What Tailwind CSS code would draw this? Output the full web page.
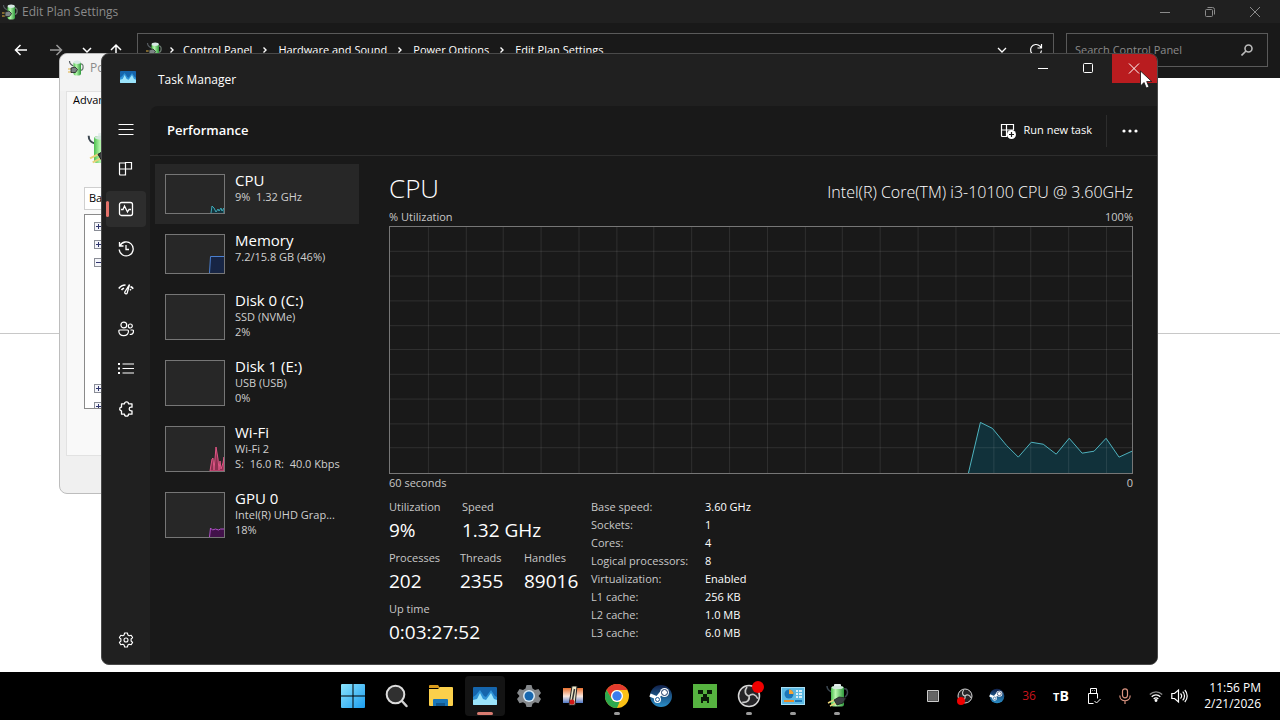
<!DOCTYPE html>
<html lang="en">
<head>
    <meta charset="UTF-8">
    <meta name="viewport" content="width=device-width, initial-scale=1.0">
    <title>Task Manager</title>
    <script src="https://cdn.jsdelivr.net/npm/@tailwindcss/browser@4"></script>
</head>
<body class="h-screen flex flex-col overflow-hidden bg-white font-['Open_Sans','Noto_Sans',sans-serif] text-[11px] text-white">

    <!-- Shared icons -->
    <svg class="absolute size-0">
        <linearGradient id="steamBg" x1="0" y1="0" x2="0" y2="1"><stop stop-color="#11204a"/><stop offset="1" stop-color="#2a8fc9"/></linearGradient>
        <linearGradient id="cell" x1="0" y1="0" x2="1" y2="0"><stop stop-color="#4cc04f"/><stop offset=".35" stop-color="#b8f7ae"/><stop offset="1" stop-color="#2f9a3c"/></linearGradient>
        <symbol id="power" viewBox="0 0 16 16">
            <path d="M1.500 1c0 3 1.500 4 4 5" fill="none" stroke="#555b60" stroke-width="1.200"/>
            <path d="M12.500 4c3.500-.5 3.500 6 0 6.500" fill="none" stroke="#6b7a70" stroke-width="1.200"/>
            <rect x="5.500" y="1.500" width="7.500" height="14" rx="2" fill="url(#cell)"/>
            <ellipse cx="9.200" cy="2.200" rx="3.600" ry="1.700" fill="#d7e8e4"/>
            <path d="M0 9h4M0 12h4" stroke="#e0b040" stroke-width="1.200"/>
            <path d="M3 8l4-1 2.500 2.500-2 3H3z" fill="#7c8284" stroke="#1d2122" stroke-width=".8"/>
        </symbol>
        <symbol id="battery" viewBox="0 0 24 24">
            <path d="M2 2c0 4 2 5 5 6" fill="none" stroke="#3c4750" stroke-width="1.500"/>
            <path d="M18 5c5-2 6 5 2 8" fill="none" stroke="#3c4750" stroke-width="1.500"/>
            <rect x="9" y="0" width="7" height="4" rx="1" fill="#e4eeec"/>
            <rect x="6" y="2.500" width="13" height="20" rx="2" fill="url(#cell)"/>
            <ellipse cx="12.500" cy="3.500" rx="6" ry="1.600" fill="#d3e8dd"/>
            <path d="M3 19l6-3M5 22l6-3" stroke="#e8d27a" stroke-width="1.500"/>
            <path d="M9 16l5-3 7 1-3 5-6 2z" fill="#3a3f42" stroke="#15181a" stroke-width=".7"/>
        </symbol>
        <symbol id="steam" viewBox="0 0 24 24">
            <circle cx="12" cy="12" r="11" fill="url(#steamBg)"/>
            <path d="M1 11l7 3 5-6" fill="none" stroke="#fff" stroke-width="3.500"/>
            <circle cx="15.500" cy="8.500" r="4.500" fill="#fff"/>
            <circle cx="15.500" cy="8.500" r="3" fill="#fff" stroke="#173463" stroke-width="1"/>
            <circle cx="8.500" cy="15.500" r="3.500" fill="#fff"/>
            <circle cx="8.500" cy="15.500" r="2" fill="#fff" stroke="#1c5a94" stroke-width="1"/>
        </symbol>
        <symbol id="obs" viewBox="0 0 24 24">
            <circle cx="12" cy="12" r="10.500" fill="#252427" stroke="#d8d8d8" stroke-width="1.500"/>
            <g fill="none" stroke="#c9c9c9" stroke-width="1.700">
                <path d="M12 12c-4-1-5-5-2-9"/>
                <path d="M12 12c-4-1-5-5-2-9" transform="rotate(120 12 12)"/>
                <path d="M12 12c-4-1-5-5-2-9" transform="rotate(240 12 12)"/>
            </g>
        </symbol>
        <symbol id="wave" viewBox="0 0 24 18">
            <rect width="24" height="18" rx="1" fill="#1565ac"/>
            <path d="M0 10l3-2 4-5 4 6 2 1 5-7 4 6 2 1v8H0z" fill="#2f93d6"/>
            <path d="M0 13l4-1 3-6 3 6 3 1 5-7 3 6 3 1v4a1 1 0 0 1-1 1H1a1 1 0 0 1-1-1z" fill="#9be4fb"/>
        </symbol>
        <symbol id="plus" viewBox="0 0 9 9">
            <rect x=".5" y=".5" width="8" height="8" fill="#f4f5fa" stroke="#8a8d96"/>
            <path d="M2 4.500h5M4.500 2v5" stroke="#30366e"/>
        </symbol>
        <symbol id="minus" viewBox="0 0 9 9">
            <rect x=".5" y=".5" width="8" height="8" fill="#f4f5fa" stroke="#8a8d96"/>
            <path d="M2 4.500h5" stroke="#30366e"/>
        </symbol>
        <symbol id="chevron" viewBox="0 0 6 8"><path d="M1.500 1.500l2.500 2.500-2.500 2.500" fill="none" stroke="#fff" stroke-width="1.400"/></symbol>
    </svg>

    <main class="relative flex-1 min-h-0">

        <!-- Control Panel window -->
        <section class="absolute inset-0 flex flex-col">
            <header class="h-[23px] shrink-0 bg-[#202020] flex items-center pl-0.5 pr-[3px] text-[#8b8b8b]">
                <svg class="size-4"><use href="#power"/></svg>
                <h1 class="ml-1 text-[12px]">Edit Plan Settings</h1>
                <div class="ml-auto flex h-5">
                    <button aria-label="Minimize" class="w-[45px] grid place-items-center"><svg class="size-3" viewBox="0 0 12 12" fill="none" stroke="currentColor"><path d="M1 6.500h10"/></svg></button>
                    <button aria-label="Restore" class="w-[45px] grid place-items-center"><svg class="size-3" viewBox="0 0 12 12" fill="none" stroke="currentColor"><rect x="1.500" y="3.500" width="7" height="7" rx="1"/><path d="M3.500 1.500h5a2 2 0 0 1 2 2v5"/></svg></button>
                    <button aria-label="Close" class="w-[45px] grid place-items-center"><svg class="size-3" viewBox="0 0 12 12" fill="none" stroke="currentColor"><path d="M1 1l10 10M11 1L1 11"/></svg></button>
                </div>
            </header>
            <div class="h-[55px] bg-[#191919] flex items-start pt-[10px] pl-[14px] pr-3 shrink-0">
                <nav class="flex items-center h-[34px] w-[123px]">
                    <button aria-label="Back"><svg class="w-[14px] h-3" viewBox="0 0 14 12" fill="none" stroke="#fff" stroke-width="1.500"><path d="M13 6H1.500M6.500 1l-5 5 5 5"/></svg></button>
                    <button aria-label="Forward" class="ml-[21px]"><svg class="w-[14px] h-3" viewBox="0 0 14 12" fill="none" stroke="#999" stroke-width="1.500"><path d="M1 6h11.500M7.500 1l5 5-5 5"/></svg></button>
                    <button aria-label="Recent" class="ml-[19px]"><svg class="w-[10px] h-3" viewBox="0 0 10 12" fill="none" stroke="#fff" stroke-width="1.500"><path d="M1 4l4 4 4-4"/></svg></button>
                    <button aria-label="Up" class="ml-[18px]"><svg class="w-3 h-[14px]" viewBox="0 0 12 14" fill="none" stroke="#fff" stroke-width="1.500"><path d="M6 14V2M1 7l5-5 5 5"/></svg></button>
                </nav>
                <div class="flex-1 h-[34px] border border-[#5a5a5a] flex items-center pl-2">
                    <svg class="size-4"><use href="#power"/></svg>
                    <svg class="w-1.5 h-2 ml-[7px]"><use href="#chevron"/></svg>
                    <a href="#" class="ml-2">Control Panel</a>
                    <svg class="w-1.5 h-2 mx-2.5"><use href="#chevron"/></svg>
                    <a href="#">Hardware and Sound</a>
                    <svg class="w-1.5 h-2 mx-2.5"><use href="#chevron"/></svg>
                    <a href="#">Power Options</a>
                    <svg class="w-1.5 h-2 mx-2.5"><use href="#chevron"/></svg>
                    <a href="#">Edit Plan Settings</a>
                    <button aria-label="Previous locations" class="ml-auto"><svg class="w-[10px] h-3" viewBox="0 0 10 12" fill="none" stroke="#fff" stroke-width="1.300"><path d="M1 4l4 4 4-4"/></svg></button>
                    <button aria-label="Refresh" class="ml-[22px] mr-[10px]"><svg class="size-[14px]" viewBox="0 0 14 14" fill="none" stroke="#fff" stroke-width="1.200"><path d="M12.500 7.500a5.500 5.500 0 1 1-1.500-4.300L12.500 5M12.500 1v4h-4"/></svg></button>
                </div>
                <label class="ml-3 w-[202px] h-[34px] border border-[#5a5a5a] flex items-center pl-2 pr-3.5">
                    <input type="text" aria-label="Search Control Panel" placeholder="Search Control Panel" class="flex-1 min-w-0 bg-transparent outline-none placeholder:text-[#8b8b8b]">
                    <svg class="size-3" viewBox="0 0 12 12" fill="none" stroke="#bbb" stroke-width="1.600"><circle cx="7.500" cy="4.500" r="3.500"/><path d="M5 7L.5 11.500"/></svg>
                </label>
            </div>
            <div class="flex-1 bg-white pt-[255px]"><hr class="border-[#c8c8c8]"></div>
        </section>

        <!-- Power Options dialog -->
        <section class="absolute left-[59px] top-[53px] w-[400px] h-[441px] rounded-lg border border-[#bdbdbd] bg-[#f0f0f0] text-black flex flex-col">
            <header class="h-[37px] pb-2.5 rounded-t-lg bg-[#f3f3f3] flex items-center gap-1.5 pl-2 text-[12px] text-[#8b8b8b]">
                <svg class="size-4"><use href="#power"/></svg>
                <h2>Power Options</h2>
            </header>
            <div class="ml-1.5 mr-1.5 h-[365px] bg-[#f9f9f9] border border-[#e2e2e2] flex flex-col">
                <h3 class="pl-1.5 leading-4">Advanced settings</h3>
                <svg class="ml-[19px] mt-[25px] size-8"><use href="#battery"/></svg>
                <select aria-label="Power plan" class="appearance-none ml-[17px] mt-[22px] w-[200px] h-[23px] px-1 bg-white border border-[#cfcfcf]"><option>Balanced [Active]</option></select>
                <div class="ml-[17px] mt-1 h-[195px] w-[350px] overflow-hidden bg-white border border-[#8a8a8a] pl-[9px] pt-[7px] flex flex-col gap-[9px]">
                    <svg class="size-[9px] shrink-0"><use href="#plus"/></svg>
                    <svg class="size-[9px] shrink-0"><use href="#plus"/></svg>
                    <svg class="size-[9px] shrink-0 mb-[108px]"><use href="#minus"/></svg>
                    <svg class="size-[9px] shrink-0"><use href="#plus"/></svg>
                    <svg class="size-[9px] shrink-0"><use href="#plus"/></svg>
                </div>
            </div>
        </section>

        <!-- Task Manager -->
        <section class="absolute left-[101px] right-[122px] top-[53px] bottom-[7px] rounded-lg border border-[#4a4a4a] bg-[#202020] overflow-hidden flex flex-col">
            <header class="h-[52px] shrink-0 flex items-start">
                <svg class="w-4 h-3 ml-[18px] mt-[17px]"><use href="#wave"/></svg>
                <h2 class="ml-[22px] mt-[17px] text-[12px] leading-[18px]">Task Manager</h2>
                <div class="ml-auto flex h-[29px]">
                    <button aria-label="Minimize" class="w-[45px] pr-1 grid place-items-center"><svg class="size-3" viewBox="0 0 12 12" fill="none" stroke="#fff"><path d="M1 5.500h10"/></svg></button>
                    <button aria-label="Maximize" class="w-[45px] pr-1 grid place-items-center"><svg class="size-3" viewBox="0 0 12 12" fill="none" stroke="#fff"><rect x="1.500" y=".5" width="9" height="9" rx="1"/></svg></button>
                    <button aria-label="Close" class="w-[45px] pr-0.5 grid place-items-center bg-[#b91c1f]"><svg class="size-3" viewBox="0 0 12 12" fill="none" stroke="#fff"><path d="M1 .5l10 10M11 .5l-10 10"/></svg></button>
                </div>
            </header>

            <div class="flex flex-1 min-h-0">
                <!-- Navigation rail -->
                <nav class="w-12 shrink-0 pt-[5px] pb-1.5 flex flex-col items-center gap-1 *:w-10 *:h-9 *:shrink-0 *:grid *:place-items-center *:rounded">
                    <button aria-label="Open navigation"><svg class="size-4" viewBox="0 0 16 16" stroke="#fff"><path d="M.5 3.500h15M.5 8.500h15M.5 13.500h15"/></svg></button>
                    <button aria-label="Processes"><svg class="size-4" viewBox="0 0 16 16" fill="none" stroke="#fff" stroke-width="1.200"><path d="M1.500 2h6v12h-5a1 1 0 0 1-1-1zM1.500 8h12M7.500 8v5a1 1 0 0 1-1 1M7.500 1.500h6V8h-6z"/></svg></button>
                    <button aria-label="Performance" class="relative bg-[#2d2d2d]">
                        <span class="absolute left-0 top-2.5 h-4 w-[3px] rounded-full bg-[#e5736b]"></span>
                        <svg class="size-4" viewBox="0 0 16 16" fill="none" stroke="#fff" stroke-width="1.300"><rect x="1.500" y="1.500" width="13" height="13" rx="2"/><path d="M3 8.500h2l1.500-3.500 3 6 1.500-2.500h2"/></svg>
                    </button>
                    <button aria-label="App history"><svg class="size-4" viewBox="0 0 16 16" fill="none" stroke="#fff" stroke-width="1.300"><path d="M1.500 1v4h4M1.800 5a7 7 0 1 1-.6 3.500M8 4v4.500h3"/></svg></button>
                    <button aria-label="Startup apps"><svg class="size-4" viewBox="0 0 16 16" fill="none" stroke="#fff" stroke-width="1.600"><path d="M.8 7.500C2.500 5 4.500 4 7.500 4M12.500 5.500c1 .5 2 1.200 2.700 2.200"/><path d="M11.500 3.500L9.200 12a1.300 1.300 0 0 1-2.400-1z" stroke-width="1.300"/><path d="M3.500 9c.6-1 1.500-1.600 2.600-1.800M12 8.200l1 1"/></svg></button>
                    <button aria-label="Users"><svg class="size-4" viewBox="0 0 16 16" fill="none" stroke="#fff" stroke-width="1.200"><circle cx="5.800" cy="4" r="2.900"/><circle cx="12.300" cy="5" r="2"/><path d="M2 9h7.500a1 1 0 0 1 1 1c0 3-2 4.700-4.800 4.700S.8 13 .8 10A1.100 1.100 0 0 1 2 9zM12.500 9H14.500a1 1 0 0 1 1 1c0 2.300-1.500 3.500-3.800 3.500"/></svg></button>
                    <button aria-label="Details"><svg class="size-4" viewBox="0 0 16 16" stroke="#fff" stroke-width="1.200"><path d="M4.500 3H16M4.500 7.500H16M4.500 12H16"/><path d="M0 3h2M0 7.500h2M0 12h2" stroke-width="2"/></svg></button>
                    <button aria-label="Services"><svg class="size-4" viewBox="0 0 16 16" fill="none" stroke="#fff" stroke-width="1.300" stroke-linejoin="round"><path d="M3.500 2.800H6.500a2 2 0 0 1 4 0h3.500v3.400h-1a1.800 1.800 0 0 0 0 3.600h1v3.400h-3.500a2 2 0 0 1-4 0h-3V9.800a1.800 1.800 0 0 1 0-3.600z"/></svg></button>
                    <button aria-label="Settings" class="mt-auto"><svg class="size-4" viewBox="0 0 16 16" fill="none" stroke="#fff" stroke-width="1.100" stroke-linejoin="round"><path d="M6.600 1h2.800l.5 2 1.300.8 2-.6 1.400 2.400L13.100 7v2l1.500 1.400-1.400 2.400-2-.6-1.300.8-.5 2H6.600l-.5-2-1.300-.8-2 .6-1.400-2.400L2.900 9V7L1.400 5.600l1.400-2.400 2 .6L6.100 3z"/><circle cx="8" cy="8" r="2"/></svg></button>
                </nav>

                <div class="flex-1 min-w-0 flex flex-col bg-[#191919] rounded-tl-lg">
                    <div class="h-[50px] shrink-0 border-b border-[#2d2d2d] flex items-center pl-[17px]">
                        <h3 class="text-[13px] font-semibold">Performance</h3>
                        <button class="ml-auto flex items-center gap-2">
                            <svg class="size-4" viewBox="0 0 16 16" fill="none" stroke="#fff" stroke-width="1.200"><path d="M7 13.500H2.500a1 1 0 0 1-1-1v-11h5v12M1.500 7h12M6.500 1.500h7V7"/><circle cx="11.500" cy="11.500" r="4.500" fill="#fff" stroke="none"/><path d="M11.500 9v5M9 11.500h5" stroke="#191919"/></svg>
                            <span class="font-medium">Run new task</span>
                        </button>
                        <div class="ml-3.5 h-8 border-l border-[#2d2d2d]"></div>
                        <button aria-label="More options" class="w-[50px] pr-1 grid place-items-center"><svg class="w-[18px] h-1" viewBox="0 0 18 4" fill="#fff"><circle cx="3" cy="2" r="1.600"/><circle cx="9" cy="2" r="1.600"/><circle cx="15" cy="2" r="1.600"/></svg></button>
                    </div>

                    <div class="flex flex-1 min-h-0">
                        <!-- Resource list -->
                        <ul class="w-[209px] shrink-0 pt-2 pl-[5px] text-[#cfcfcf] leading-[15px]">
                            <li class="flex h-[60px] pl-2.5 pt-[7px] gap-2.5 bg-[#272727]">
                                <svg class="mt-[3px] w-[60px] h-10 shrink-0 border border-[#767676] bg-[#272727]" viewBox="0 0 58 38"><path d="M45 38l1-7 2 2 2 4 2-3 1 2 2-3 1 3 2-3v5" fill="#12333c" stroke="#3fa9b8"/></svg>
                                <div><h4 class="text-[15px] leading-[18px] text-white">CPU</h4><p>9%&nbsp; 1.32 GHz</p></div>
                            </li>
                            <li class="flex h-[60px] pl-2.5 pt-[7px] gap-2.5">
                                <svg class="mt-[3px] w-[60px] h-10 shrink-0 border border-[#767676] bg-[#272727]" viewBox="0 0 58 38"><path d="M43.500 38l1-16.500h14.500v17" fill="#172544" stroke="#4a7fd0"/></svg>
                                <div><h4 class="text-[15px] leading-[18px] text-white">Memory</h4><p>7.2/15.8 GB (46%)</p></div>
                            </li>
                            <li class="flex h-[66px] pl-2.5 pt-[7px] gap-2.5">
                                <svg class="mt-[3px] w-[60px] h-[46px] shrink-0 border border-[#767676] bg-[#272727]"></svg>
                                <div><h4 class="text-[15px] leading-[18px] text-white">Disk 0 (C:)</h4><p>SSD (NVMe)</p><p>2%</p></div>
                            </li>
                            <li class="flex h-[66px] pl-2.5 pt-[7px] gap-2.5">
                                <svg class="mt-[3px] w-[60px] h-[46px] shrink-0 border border-[#767676] bg-[#272727]"></svg>
                                <div><h4 class="text-[15px] leading-[18px] text-white">Disk 1 (E:)</h4><p>USB (USB)</p><p>0%</p></div>
                            </li>
                            <li class="flex h-[66px] pl-2.5 pt-[7px] gap-2.5">
                                <svg class="mt-[3px] w-[60px] h-[46px] shrink-0 border border-[#767676] bg-[#272727]" viewBox="0 0 58 44"><path d="M44 44l2-12 1-1 1 12 2-23 2 12 1 11 1-9 1 8 2-6 1-6v14z" fill="#8c2f50" stroke="#e05585"/></svg>
                                <div><h4 class="text-[15px] leading-[18px] text-white">Wi-Fi</h4><p>Wi-Fi 2</p><p>S:&nbsp; 16.0 R:&nbsp; 40.0 Kbps</p></div>
                            </li>
                            <li class="flex h-[66px] pl-2.5 pt-[7px] gap-2.5">
                                <svg class="mt-[3px] w-[60px] h-[46px] shrink-0 border border-[#767676] bg-[#272727]" viewBox="0 0 58 44"><path d="M43.500 44l1-9 2 2 3-1 3 1 2-1h4v9" fill="#42124a" stroke="#b050c8"/></svg>
                                <div><h4 class="text-[15px] leading-[18px] text-white">GPU 0</h4><p>Intel(R) UHD Grap...</p><p>18%</p></div>
                            </li>
                        </ul>

                        <!-- CPU details -->
                        <div class="flex-1 min-w-0 pl-[30px] pr-6 pt-4 text-[#c8c8c8]">
                            <div class="flex items-center justify-between h-8 text-white font-light">
                                <h3 class="text-[26px] leading-8">CPU</h3>
                                <p class="text-[16px] pt-2">Intel(R) Core(TM) i3-10100 CPU @ 3.60GHz</p>
                            </div>
                            <div class="flex justify-between mt-1 leading-[18px]"><span>% Utilization</span><span>100%</span></div>
                            <svg class="block w-full h-[248px] border border-[#767676]" viewBox="0 0 744 248" preserveAspectRatio="none" fill="none">
                                <path d="M580 248L592 197 604 203 618 220 630 232 643 217 655 219 668 229 681 213 694 228 706 226 718 213 731 232 744 226V248z" fill="#11313a"/>
                                <path stroke="#fff" stroke-opacity=".1" d="M38.500 0v248M76.500 0v248M113.500 0v248M151.500 0v248M189.500 0v248M227.500 0v248M264.500 0v248M302.500 0v248M340.500 0v248M378.500 0v248M416.500 0v248M453.500 0v248M491.500 0v248M529.500 0v248M567.500 0v248M605.500 0v248M642.500 0v248M680.500 0v248M718.500 0v248M0 24.500h744M0 49.500h744M0 74.500h744M0 99.500h744M0 123.500h744M0 148.500h744M0 173.500h744M0 198.500h744M0 222.500h744"/>
                                <path d="M580 248L592 197 604 203 618 220 630 232 643 217 655 219 668 229 681 213 694 228 706 226 718 213 731 232 744 226" stroke="#4fb3bf"/>
                            </svg>
                            <div class="flex justify-between leading-[18px]"><span>60 seconds</span><span>0</span></div>

                            <div class="flex pt-1.5">
                                <dl class="w-[202px] grid gap-y-1 *:flex">
                                    <div>
                                        <div class="w-[73px]"><dt class="leading-[18px]">Utilization</dt><dd class="text-[19px] leading-[29px] text-white">9%</dd></div>
                                        <div><dt class="leading-[18px]">Speed</dt><dd class="text-[19px] leading-[29px] text-white">1.32 GHz</dd></div>
                                    </div>
                                    <div>
                                        <div class="w-[71px]"><dt class="leading-[18px]">Processes</dt><dd class="text-[19px] leading-[29px] text-white">202</dd></div>
                                        <div class="w-16"><dt class="leading-[18px]">Threads</dt><dd class="text-[19px] leading-[29px] text-white">2355</dd></div>
                                        <div><dt class="leading-[18px]">Handles</dt><dd class="text-[19px] leading-[29px] text-white">89016</dd></div>
                                    </div>
                                    <div>
                                        <div><dt class="leading-[18px]">Up time</dt><dd class="text-[19px] leading-[29px] text-white">0:03:27:52</dd></div>
                                    </div>
                                </dl>
                                <table class="self-start leading-[18px] text-left">
                                    <tr><th class="w-[114px] font-normal">Base speed:</th><td class="text-white">3.60 GHz</td></tr>
                                    <tr><th class="font-normal">Sockets:</th><td class="text-white">1</td></tr>
                                    <tr><th class="font-normal">Cores:</th><td class="text-white">4</td></tr>
                                    <tr><th class="font-normal">Logical processors:</th><td class="text-white">8</td></tr>
                                    <tr><th class="font-normal">Virtualization:</th><td class="text-white">Enabled</td></tr>
                                    <tr><th class="font-normal">L1 cache:</th><td class="text-white">256 KB</td></tr>
                                    <tr><th class="font-normal">L2 cache:</th><td class="text-white">1.0 MB</td></tr>
                                    <tr><th class="font-normal">L3 cache:</th><td class="text-white">6.0 MB</td></tr>
                                </table>
                            </div>
                        </div>
                    </div>
                </div>
            </div>
        </section>

        <!-- Mouse pointer -->
        <svg class="absolute right-[128px] top-[70px] w-3 h-[19px]" viewBox="0 0 12 19"><path d="M.5 1v15l3.500-3.500 2.300 5.500 2.700-1-2.300-5.500h5z" fill="#fff" stroke="#111" stroke-width=".8"/></svg>
    </main>

    <!-- Taskbar -->
    <footer class="h-12 shrink-0 bg-black flex">
        <div class="w-[272px]"></div>
        <nav class="flex-1 flex justify-center *:relative *:w-11 *:grid *:place-items-center">
            <button aria-label="Start"><svg class="size-6" viewBox="0 0 24 24"><linearGradient id="win" x1="0" y1="0" x2="1" y2="1"><stop stop-color="#8be4fd"/><stop offset="1" stop-color="#1b9df0"/></linearGradient><path d="M0 1a1 1 0 0 1 1-1h10.500v11.500H0zM12.500 0H23a1 1 0 0 1 1 1v10.500H12.500zM0 12.500h11.500V24H1a1 1 0 0 1-1-1zM12.500 12.500H24V23a1 1 0 0 1-1 1H12.500z" fill="url(#win)"/></svg></button>
            <button aria-label="Search"><svg class="size-6" viewBox="0 0 24 24"><path d="M16 16l5.500 6" stroke="#d0d0d0" stroke-width="2.500" stroke-linecap="round"/><circle cx="10.500" cy="10.500" r="8.800" fill="#303030" stroke="#dcdcdc" stroke-width="2"/></svg></button>
            <button aria-label="File Explorer"><svg class="size-6" viewBox="0 0 24 24"><path d="M0 2a1 1 0 0 1 1-1h8l2 3H0z" fill="#d99b1c"/><path d="M0 5h9l2-2h12a1 1 0 0 1 1 1v17a1 1 0 0 1-1 1H1a1 1 0 0 1-1-1z" fill="#fbd04b"/><path d="M4 22v-6a1 1 0 0 1 1-1h13a1 1 0 0 1 1 1v6z" fill="#1a76b8"/><path d="M7 19h9v3H7z" fill="#12568c"/></svg></button>
            <button aria-label="Task Manager">
                <span class="absolute inset-x-0.5 inset-y-1 rounded bg-[#141414]"></span>
                <svg class="relative w-6 h-[18px]"><use href="#wave"/></svg>
                <span class="absolute bottom-[5px] left-3.5 w-4 h-[3px] rounded-full bg-[#d87b70]"></span>
            </button>
            <button aria-label="Settings"><svg class="size-6" viewBox="0 0 24 24"><path d="M9.500 1h5l1 3.500 2.500 1.500 3.500-1 2.500 4-2.500 3 2.500 3-2.500 4.200-3.500-1-2.500 1.500-1 3.300h-5l-1-3.300L6 18.200l-3.500 1L0 15l2.500-3L0 9l2.500-4L6 6l2.500-1.500z" fill="#85888b"/><circle cx="12" cy="12" r="6" fill="#d8e9f5"/><circle cx="12" cy="12" r="4.500" fill="#1867ae"/></svg></button>
            <button aria-label="Temperature monitor"><svg class="size-5" viewBox="0 0 20 20"><linearGradient id="temp" x1="0" y1="0" x2="0" y2="1"><stop stop-color="#e8702f"/><stop offset=".55" stop-color="#fbe9e0"/><stop offset="1" stop-color="#4f79c9"/></linearGradient><path d="M0 2h20v15H0z" fill="url(#temp)"/><path d="M9 0h5l-2 19H6z" fill="#eae6c8" stroke="#222"/><path d="M11.500 3L9.500 14" stroke="#333" stroke-width="1.500"/><circle cx="9" cy="16" r="2.500" fill="#d01818"/></svg></button>
            <button aria-label="Chrome">
                <svg class="size-6" viewBox="0 0 24 24"><circle cx="12" cy="12" r="12" fill="#fbc116"/><path d="M1.600 6A12 12 0 0 1 22.400 6H12a6 6 0 0 0-5.200 9z" fill="#e33b2e"/><path d="M1.600 6L6.800 15A6 6 0 0 0 12 18l2.500 0L12 24A12 12 0 0 1 1.600 6z" fill="#2da94f"/><circle cx="12" cy="12" r="6" fill="#fff"/><circle cx="12" cy="12" r="4.700" fill="#3b7ded"/></svg>
                <span class="absolute bottom-[5px] left-[19px] w-1.5 h-[3px] rounded-full bg-[#9a9a9a]"></span>
            </button>
            <button aria-label="Steam"><svg class="size-6"><use href="#steam"/></svg></button>
            <button aria-label="Minecraft"><svg class="size-6" viewBox="0 0 24 24"><path fill="#56b340" d="M0 0h24v24H0z"/><path fill="#0a1c08" d="M5 6h5v4H5zM14 6h5v4h-5zM10 10h4v3h2v6h-2v-2h-4v2H8v-6h2z"/></svg></button>
            <button aria-label="OBS Studio">
                <svg class="size-6"><use href="#obs"/></svg>
                <span class="absolute top-[9px] right-[7px] size-3 rounded-full bg-[#f00000]"></span>
                <span class="absolute bottom-[5px] left-[19px] w-1.5 h-[3px] rounded-full bg-[#9a9a9a]"></span>
            </button>
            <button aria-label="Control Panel">
                <svg class="w-6 h-[18px]" viewBox="0 0 24 18"><rect x=".5" y=".5" width="23" height="17" fill="#5cb9e3" stroke="#a8dff5"/><circle cx="8" cy="7" r="4.500" fill="#1b76b8"/><path d="M8 7V2.500A4.500 4.500 0 0 1 12.500 7z" fill="#f3a233"/><path d="M15 4h2M18 4h3M15 7h2M18 7h3M15 10h2M18 10h3" stroke="#fff" stroke-width="1.500"/><path d="M3 14h10" stroke="#e78b28" stroke-width="2"/><path d="M14 14h7" stroke="#1b76b8" stroke-width="2"/></svg>
                <span class="absolute bottom-[5px] left-[19px] w-1.5 h-[3px] rounded-full bg-[#9a9a9a]"></span>
            </button>
            <button aria-label="Power Options">
                <svg class="size-6"><use href="#battery"/></svg>
                <span class="absolute bottom-[5px] left-[19px] w-1.5 h-[3px] rounded-full bg-[#9a9a9a]"></span>
            </button>
        </nav>
        <div class="w-[363px] flex items-center pr-[19px]">
            <div class="flex *:w-8 *:grid *:place-items-center">
                <button aria-label="CPU meter"><svg class="size-3" viewBox="0 0 12 12"><path fill="#444" stroke="#ccc" d="M.5 .5h11v11H.5z"/><path stroke="#888" stroke-width=".6" d="M3 1v10M5 1v10M7 1v10M9 1v10M1 3h10M1 5h10M1 7h10M1 9h10"/></svg></button>
                <button aria-label="OBS Studio" class="relative"><svg class="size-4"><use href="#obs"/></svg><span class="absolute left-2 bottom-0 size-2 rounded-full bg-[#f00000]"></span></button>
                <button aria-label="Steam"><svg class="size-4"><use href="#steam"/></svg></button>
                <button class="text-[12px] leading-4 text-[#c8141c]">36</button>
                <button class="text-[14px] leading-4 font-bold"><span><span class="text-[11px]">T</span>B</span></button>
                <button aria-label="Eject device"><svg class="size-4" viewBox="0 0 16 16" fill="none" stroke="#fff"><path d="M5.500 5.500v-5h6v5M7.500 2.500h.5M9.500 2.500h.5M8.500 15.500h-5v-10h9v5"/><path d="M9.500 13l2 2 4-4"/></svg></button>
                <button aria-label="Microphone"><svg class="size-4" viewBox="0 0 16 16" fill="none" stroke="#d99380" stroke-width="1.200"><rect x="5.500" y=".8" width="5" height="9" rx="2.500"/><path d="M2.800 7.500c0 7 10.400 7 10.400 0M8 12.800V16"/></svg></button>
            </div>
            <button aria-label="Network and volume" class="flex gap-2 ml-2">
                <svg class="w-[14px] h-4" viewBox="0 0 14 16" fill="none" stroke="#fff" stroke-width="1.300"><path d="M.8 6.500c3.500-3.600 8.900-3.600 12.400 0" stroke="#888"/><path d="M2.700 8.800c2.400-2.500 6.200-2.500 8.600 0M4.700 11c1.300-1.400 3.300-1.400 4.600 0"/><circle cx="7" cy="12.500" r=".8" fill="#fff"/></svg>
                <svg class="w-[17px] h-4" viewBox="0 0 17 16" fill="none" stroke="#fff" stroke-width="1.200"><path d="M.8 5.500h2.700l4-3.500v12l-4-3.500H.8zM9.500 5.500c1.300 1.400 1.300 3.600 0 5M11.700 3.700c2.400 2.400 2.400 6.200 0 8.600M13.800 2c3.200 3.400 3.200 8.600 0 12"/></svg>
            </button>
            <button class="ml-auto text-right text-[12px] leading-4">11:56 PM<br>2/21/2026</button>
        </div>
    </footer>
</body>
</html>
